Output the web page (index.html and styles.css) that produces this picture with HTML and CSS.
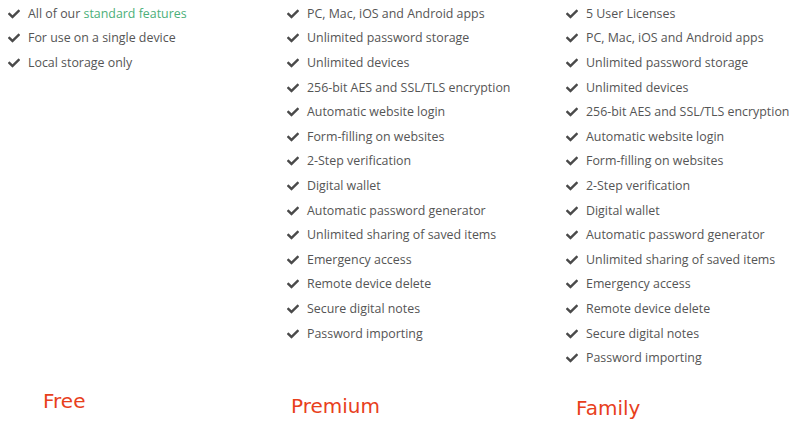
FILE: index.html
```html
<!DOCTYPE html>
<html lang="en">
<head>
<meta charset="utf-8">
<title>Plans</title>
<link rel="stylesheet" href="styles.css">
</head>
<body>
<svg width="0" height="0" class="defs">
  <symbol id="chk" viewBox="0 0 512 512"><path d="M173.898 439.404l-166.4-166.4c-9.997-9.997-9.997-26.206 0-36.204l36.203-36.204c9.997-9.998 26.207-9.998 36.204 0L192 312.69 432.095 72.596c9.997-9.997 26.207-9.997 36.204 0l36.203 36.204c9.997 9.997 9.997 26.206 0 36.204l-294.4 294.401c-9.998 9.997-26.207 9.997-36.204-.001z"/></symbol>
</svg>
<div class="plans">
  <ul class="features">
    <li><svg class="ic"><use href="#chk"/></svg><span>All of our <a class="link">standard features</a></span></li>
    <li><svg class="ic"><use href="#chk"/></svg><span>For use on a single device</span></li>
    <li><svg class="ic"><use href="#chk"/></svg><span>Local storage only</span></li>
  </ul>
  <ul class="features">
    <li><svg class="ic"><use href="#chk"/></svg><span>PC, Mac, iOS and Android apps</span></li>
    <li><svg class="ic"><use href="#chk"/></svg><span>Unlimited password storage</span></li>
    <li><svg class="ic"><use href="#chk"/></svg><span>Unlimited devices</span></li>
    <li><svg class="ic"><use href="#chk"/></svg><span>256-bit AES and SSL/TLS encryption</span></li>
    <li><svg class="ic"><use href="#chk"/></svg><span>Automatic website login</span></li>
    <li><svg class="ic"><use href="#chk"/></svg><span>Form-filling on websites</span></li>
    <li><svg class="ic"><use href="#chk"/></svg><span>2-Step verification</span></li>
    <li><svg class="ic"><use href="#chk"/></svg><span>Digital wallet</span></li>
    <li><svg class="ic"><use href="#chk"/></svg><span>Automatic password generator</span></li>
    <li><svg class="ic"><use href="#chk"/></svg><span>Unlimited sharing of saved items</span></li>
    <li><svg class="ic"><use href="#chk"/></svg><span>Emergency access</span></li>
    <li><svg class="ic"><use href="#chk"/></svg><span>Remote device delete</span></li>
    <li><svg class="ic"><use href="#chk"/></svg><span>Secure digital notes</span></li>
    <li><svg class="ic"><use href="#chk"/></svg><span>Password importing</span></li>
  </ul>
  <ul class="features">
    <li><svg class="ic"><use href="#chk"/></svg><span>5 User Licenses</span></li>
    <li><svg class="ic"><use href="#chk"/></svg><span>PC, Mac, iOS and Android apps</span></li>
    <li><svg class="ic"><use href="#chk"/></svg><span>Unlimited password storage</span></li>
    <li><svg class="ic"><use href="#chk"/></svg><span>Unlimited devices</span></li>
    <li><svg class="ic"><use href="#chk"/></svg><span>256-bit AES and SSL/TLS encryption</span></li>
    <li><svg class="ic"><use href="#chk"/></svg><span>Automatic website login</span></li>
    <li><svg class="ic"><use href="#chk"/></svg><span>Form-filling on websites</span></li>
    <li><svg class="ic"><use href="#chk"/></svg><span>2-Step verification</span></li>
    <li><svg class="ic"><use href="#chk"/></svg><span>Digital wallet</span></li>
    <li><svg class="ic"><use href="#chk"/></svg><span>Automatic password generator</span></li>
    <li><svg class="ic"><use href="#chk"/></svg><span>Unlimited sharing of saved items</span></li>
    <li><svg class="ic"><use href="#chk"/></svg><span>Emergency access</span></li>
    <li><svg class="ic"><use href="#chk"/></svg><span>Remote device delete</span></li>
    <li><svg class="ic"><use href="#chk"/></svg><span>Secure digital notes</span></li>
    <li><svg class="ic"><use href="#chk"/></svg><span>Password importing</span></li>
  </ul>
  <div class="label label-free">Free</div>
  <div class="label label-premium">Premium</div>
  <div class="label label-family">Family</div>
</div>
</body>
</html>
```
FILE: styles.css
```css
html, body {
  margin: 0;
  padding: 0;
  background: #ffffff;
}
body {
  width: 800px;
  height: 429px;
  overflow: hidden;
}
.defs {
  position: absolute;
  width: 0;
  height: 0;
}
.plans {
  display: grid;
  grid-template-columns: 279px 279px 242px;
  grid-template-rows: 369px 60px;
  padding-left: 8px;
  padding-top: 1px;
}
.features {
  list-style: none;
  margin: 0;
  padding: 0;
  font-family: "Open Sans", sans-serif;
  font-size: 12.4px;
  color: #555555;
}
.features li {
  display: flex;
  align-items: center;
  gap: 8px;
  height: 24.6px;
  white-space: nowrap;
}
.ic {
  width: 12px;
  height: 12px;
  fill: #4a4a4a;
  flex: none;
  margin-top: 1px;
}
.link {
  color: #4caf79;
  text-decoration: none;
}
.label {
  font-family: "DejaVu Sans", sans-serif;
  font-size: 20px;
  line-height: 24px;
  color: #e8401c;
}
.label-free {
  margin-top: 19px;
  padding-left: 35px;
}
.label-premium {
  margin-top: 24px;
  padding-left: 4px;
}
.label-family {
  margin-top: 26px;
  padding-left: 10px;
}
```
